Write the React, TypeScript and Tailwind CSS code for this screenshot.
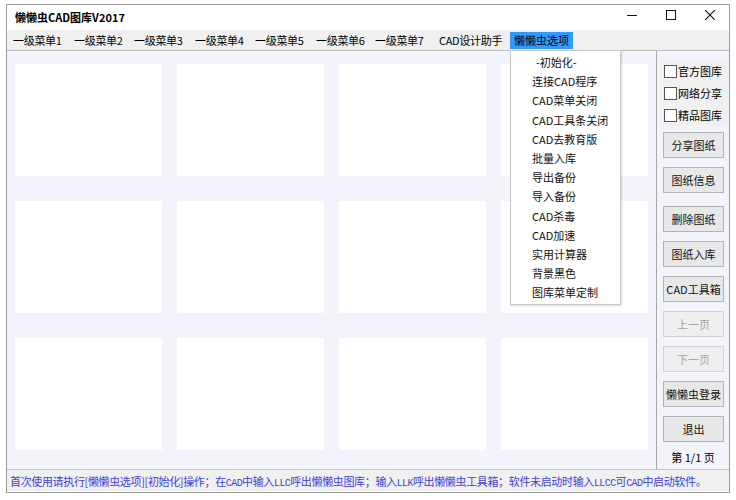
import React from "react";

const menus: [string, string][] = [
  ["一级菜单1", "w-[61px]"],
  ["一级菜单2", "w-[60px]"],
  ["一级菜单3", "w-[61px]"],
  ["一级菜单4", "w-[60px]"],
  ["一级菜单5", "w-[61px]"],
  ["一级菜单6", "w-[59px]"],
  ["一级菜单7", "w-[64px]"],
  ["CAD设计助手", "w-[77px]"],
];

const dropItems = [
  "-初始化-",
  "连接CAD程序",
  "CAD菜单关闭",
  "CAD工具条关闭",
  "CAD去教育版",
  "批量入库",
  "导出备份",
  "导入备份",
  "CAD杀毒",
  "CAD加速",
  "实用计算器",
  "背景黑色",
  "图库菜单定制",
];

const checks = ["官方图库", "网络分享", "精品图库"];

// status line, latin parts are narrow like the bitmap font
const status: [string, boolean][] = [
  ["首次使用请执行[懒懒虫选项][初始化]操作；在", false],
  ["CAD", true],
  ["中输入", false],
  ["LLC", true],
  ["呼出懒懒虫图库；输入", false],
  ["LLK", true],
  ["呼出懒懒虫工具箱；软件未启动时输入", false],
  ["LLCC", true],
  ["可", false],
  ["CAD", true],
  ["中启动软件。", false],
];

const Btn = ({ label, disabled, className }: { label: string; disabled?: boolean; className?: string }) => (
  <div
    className={
      "w-[61px] h-[26px] flex items-center justify-center border text-[11px] " +
      (disabled
        ? "bg-[#efefef] border-[#d2d2d2] text-[#a6a6a6] "
        : "bg-[#e8e8e8] border-[#b4b4b4] text-[#111] ") +
      (className || "")
    }
  >
    {label}
  </div>
);

const App = () => {
  return (
    <div className="w-[736px] h-[500px] bg-white pt-[4px] pl-[6px] font-['Noto_Sans_CJK_SC',sans-serif] text-black">
      <div className="relative w-[724px] h-[489px] border border-[#9c9c9c] bg-white flex flex-col">
        {/* title bar */}
        <div className="h-[25px] flex justify-between">
          <div className="pl-[8px] pt-[3px] text-[11px] font-bold leading-[18px]">懒懒虫CAD图库V2017</div>
          <div className="flex">
            <div className="w-[39px] h-[20px] flex items-center justify-center">
              <svg width="10" height="10" viewBox="0 0 10 10">
                <path d="M0 5.5h10" stroke="#111" strokeWidth="1" />
              </svg>
            </div>
            <div className="w-[39px] h-[20px] flex items-center justify-center">
              <svg width="10" height="10" viewBox="0 0 10 10">
                <rect x="0.5" y="0.5" width="9" height="9" fill="none" stroke="#111" strokeWidth="1" />
              </svg>
            </div>
            <div className="w-[39px] h-[20px] flex items-center justify-center">
              <svg width="10" height="10" viewBox="0 0 10 10">
                <path d="M0 0L10 10M10 0L0 10" stroke="#111" strokeWidth="1.1" />
              </svg>
            </div>
          </div>
        </div>

        {/* menu bar */}
        <div className="h-[20px] bg-[#f0f0f0] flex items-center text-[11px] whitespace-nowrap">
          {menus.map(([m, w]) => (
            <div key={m} className={"pl-[6px] h-[17px] leading-[17px] tracking-[-0.3px] " + w}>
              {m}
            </div>
          ))}
          <div className="w-[63px] h-[17px] leading-[17px] bg-[#3399ff] text-center">懒懒虫选项</div>
        </div>

        {/* main */}
        <div className="flex h-[419px] border-t border-[#bdbdbd]">
          <div className="w-[649px] bg-[#f3f3fc] pt-[13px] px-[8px]">
            <div className="grid grid-cols-[147px_147px_147px_147px] gap-x-[15px] gap-y-[25px]">
              {Array.from({ length: 12 }).map((_, i) => (
                <div key={i} className="h-[112px] bg-white" />
              ))}
            </div>
          </div>
          <div className="w-[73px] border-l border-[#a8a8a8] bg-[#f3f3fb] flex flex-col">
            <div className="pt-[9px] flex flex-col">
              {checks.map((c) => (
                <div key={c} className="h-[22px] ml-[5px] mr-[1px] flex items-center bg-[#f0f0f0] text-[11px]">
                  <div className="w-[13px] h-[13px] ml-[2px] border border-[#555] bg-white" />
                  <span className="ml-[1px]">{c}</span>
                </div>
              ))}
            </div>
            <div className="mt-[6px] ml-[6px] flex flex-col gap-[9px]">
              <Btn label="分享图纸" />
              <Btn label="图纸信息" />
              <Btn label="删除图纸" className="mt-[4px]" />
              <Btn label="图纸入库" />
              <Btn label="CAD工具箱" />
              <Btn label="上一页" disabled />
              <Btn label="下一页" disabled />
              <Btn label="懒懒虫登录" />
              <Btn label="退出" />
            </div>
            <div className="mt-[8px] text-center text-[11px] leading-[14px]">第 1/1 页</div>
          </div>
        </div>

        {/* status bar */}
        <div className="h-[22px] border-t border-[#c4c4c4] bg-[#f0f0f0] flex items-baseline pt-[3px] pl-[3px] text-[11px] leading-[16px] text-[#3f3fd6] whitespace-nowrap">
          {status.map(([t, latin], i) =>
            latin ? (
              <span key={i} className="font-['Liberation_Mono',monospace] text-[10px] tracking-[-0.6px]">
                {t}
              </span>
            ) : (
              <span key={i} className="tracking-[-0.35px]">{t}</span>
            )
          )}
        </div>

        {/* dropdown */}
        <div className="absolute left-[503px] top-[45px] w-[111px] h-[255px] bg-white border border-[#c8c8c8] pt-[2px] shadow-[1px_1px_2px_rgba(0,0,0,0.15)]">
          {dropItems.map((d, i) => (
            <div key={d} className={"h-[19.2px] leading-[19.2px] text-[11px] text-[#111] " + (i === 0 ? "pl-[25px]" : "pl-[21px]")}>
              {d}
            </div>
          ))}
        </div>
      </div>
    </div>
  );
};

export default App;
